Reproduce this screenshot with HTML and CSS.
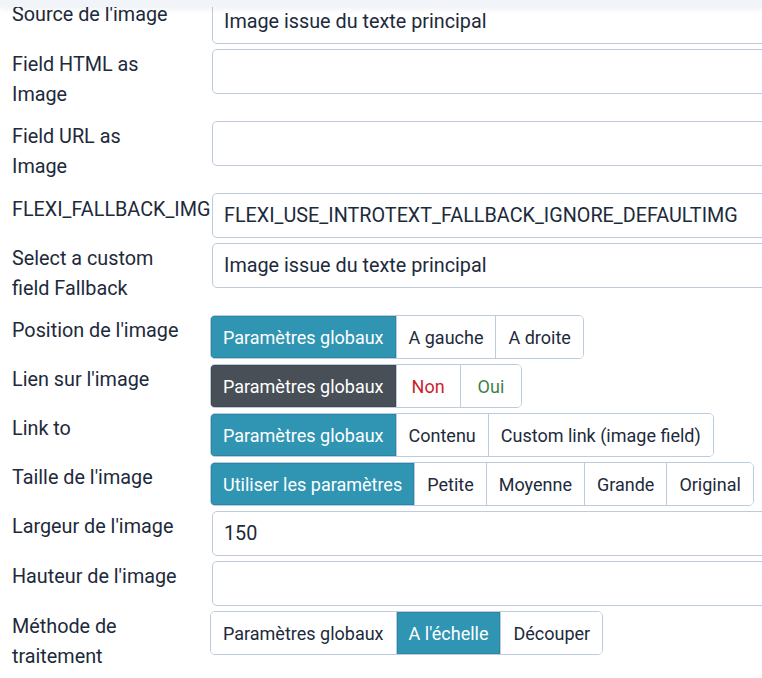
FILE: index.html
```html
<!DOCTYPE html>
<html lang="fr">
<head>
<meta charset="utf-8">
<title>Image</title>
<link rel="stylesheet" href="styles.css">
</head>
<body>
<div class="topbar"></div>
<div class="form">
  <div class="row">
    <label class="lbl">Source de l'image</label>
    <input class="field" type="text" value="Image issue du texte principal">
  </div>
  <div class="row">
    <label class="lbl">Field HTML as Image</label>
    <input class="field" type="text" value="">
  </div>
  <div class="row">
    <label class="lbl">Field URL as<br>Image</label>
    <input class="field" type="text" value="">
  </div>
  <div class="row">
    <label class="lbl nowrap">FLEXI_FALLBACK_IMG</label>
    <input class="field" type="text" value="FLEXI_USE_INTROTEXT_FALLBACK_IGNORE_DEFAULTIMG">
  </div>
  <div class="row">
    <label class="lbl">Select a custom field Fallback</label>
    <input class="field" type="text" value="Image issue du texte principal">
  </div>
  <div class="row">
    <label class="lbl">Position de l'image</label>
    <div class="group">
      <span class="btn active">Paramètres globaux</span>
      <span class="btn">A gauche</span>
      <span class="btn">A droite</span>
    </div>
  </div>
  <div class="row">
    <label class="lbl">Lien sur l'image</label>
    <div class="group">
      <span class="btn active dark">Paramètres globaux</span>
      <span class="btn no">Non</span>
      <span class="btn yes">Oui</span>
    </div>
  </div>
  <div class="row">
    <label class="lbl">Link to</label>
    <div class="group">
      <span class="btn active">Paramètres globaux</span>
      <span class="btn">Contenu</span>
      <span class="btn">Custom link (image field)</span>
    </div>
  </div>
  <div class="row">
    <label class="lbl">Taille de l'image</label>
    <div class="group">
      <span class="btn active">Utiliser les paramètres</span>
      <span class="btn">Petite</span>
      <span class="btn">Moyenne</span>
      <span class="btn">Grande</span>
      <span class="btn">Original</span>
    </div>
  </div>
  <div class="row">
    <label class="lbl">Largeur de l'image</label>
    <input class="field" type="text" value="150">
  </div>
  <div class="row">
    <label class="lbl">Hauteur de l'image</label>
    <input class="field" type="text" value="">
  </div>
  <div class="row">
    <label class="lbl">Méthode de traitement</label>
    <div class="group">
      <span class="btn">Paramètres globaux</span>
      <span class="btn active">A l'échelle</span>
      <span class="btn">Découper</span>
    </div>
  </div>
</div>
</body>
</html>
```

FILE: styles.css
```css
html, body {
  margin: 0;
  padding: 0;
  overflow: hidden;
  background: #ffffff;
}
body {
  font-family: Roboto, "Liberation Sans", sans-serif;
  font-size: 19.8px;
  color: #1d2a3b;
}
.topbar {
  position: fixed;
  top: 0;
  left: 0;
  right: 0;
  height: 7px;
  background: #f1f4f8;
  box-shadow: 0 2px 6px rgba(30, 50, 80, 0.08);
  z-index: 5;
}
.form {
  margin-top: -1px;
  padding-left: 12px;
}
.row {
  display: flex;
  align-items: flex-start;
  margin-bottom: 5px;
}
.lbl {
  flex: 0 0 200px;
  width: 200px;
  line-height: 30px;
  padding-top: 1px;
  padding-bottom: 6px;
  padding-right: 24px;
  box-sizing: border-box;
}
.lbl.nowrap {
  white-space: nowrap;
  padding-right: 0;
  padding-top: 2px;
}
.field {
  flex: 0 0 580px;
  width: 580px;
  height: 45px;
  box-sizing: border-box;
  border: 1px solid #bfcbdd;
  border-radius: 5px;
  padding: 0 11px;
  font-family: Roboto, "Liberation Sans", sans-serif;
  font-size: 19.8px;
  color: #1d2a3b;
  background: #fff;
  outline: none;
}
.group {
  display: flex;
  margin-left: -2px;
  border: 1px solid #bccbe0;
  border-radius: 5px;
  overflow: hidden;
  height: 44px;
  box-sizing: border-box;
  font-size: 18px;
}
.btn {
  display: flex;
  align-items: center;
  padding: 0 12px;
  height: 42px;
  background: #fff;
  color: #1d2a3b;
  border-left: 1px solid #bccbe0;
  white-space: nowrap;
}
.btn:first-child {
  border-left: none;
}
.btn.active {
  background: #2f95b3;
  color: #ffffff;
  box-shadow: inset 0 0 0 1px #2a87a3;
}
.btn.active.dark {
  background: #484f57;
  box-shadow: inset 0 0 0 1px #41474e;
}
.btn.no {
  color: #c8242b;
  padding: 0 15px;
}
.btn.yes {
  color: #3f7f4d;
  padding: 0 17px;
}
```
